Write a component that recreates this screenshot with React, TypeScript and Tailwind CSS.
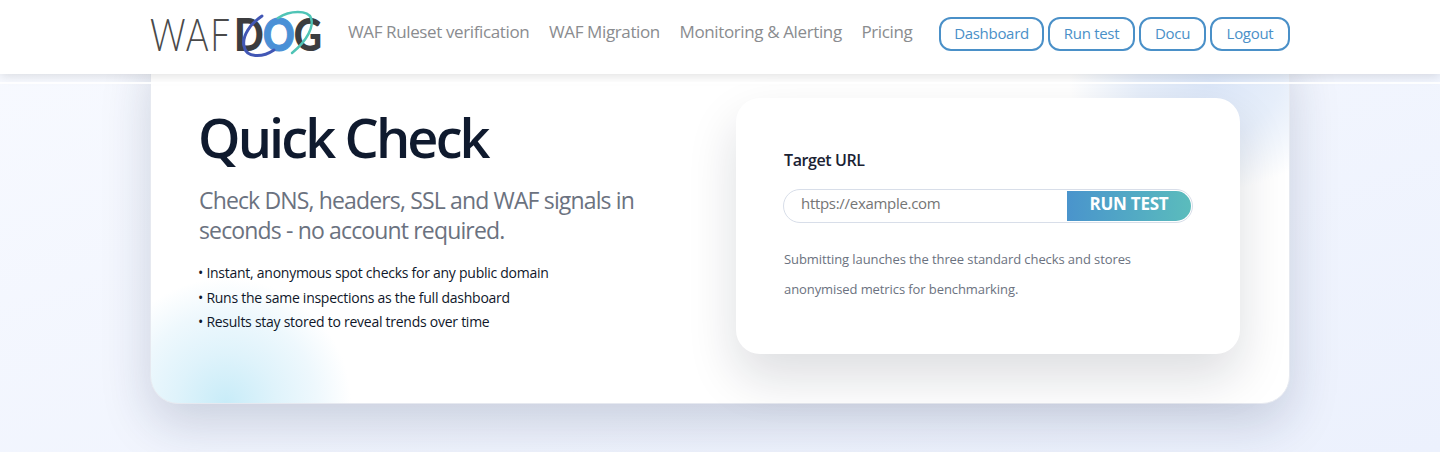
const NAV_LINKS = ['WAF Ruleset verification', 'WAF Migration', 'Monitoring & Alerting', 'Pricing'];
const NAV_BUTTONS = [
  { label: 'Dashboard', width: 'w-[105px]' },
  { label: 'Run test', width: 'w-[87px]' },
  { label: 'Docu', width: 'w-[67px]' },
  { label: 'Logout', width: 'w-[80px]' },
];
const BULLETS = [
  'Instant, anonymous spot checks for any public domain',
  'Runs the same inspections as the full dashboard',
  'Results stay stored to reveal trends over time',
];

// ─── Logo ─────────────────────────────────────────────────────────────────────
function Logo() {
  return (
    <div className="relative w-[172px] h-[44px] shrink-0 flex items-center leading-none whitespace-nowrap font-['Lato',sans-serif]">
      <span className="inline-block w-[87px] shrink-0 origin-left scale-x-[0.76] text-[46px] font-light text-[#4a4a4a] tracking-[2px] -mr-[3px]">WAF</span>
      <span className="inline-block w-[85px] shrink-0 origin-left scale-x-[0.85] text-[46px] font-black text-[#3c3d3f] tracking-[-1px]">
        D<span className="text-[#4a90d6] [-webkit-text-stroke:1px_#4a90d6]">O</span>G
      </span>
      <svg className="absolute left-0 top-[-8px]" width="172" height="60" viewBox="0 0 172 60" fill="none">
        <path d="M112 12 C 100 20, 92 32, 94 42 C 96 54, 112 54, 124 46" stroke="#4257b5" strokeWidth="3" strokeLinecap="round" />
        <path d="M128 14 C 140 6, 158 6, 161 14 C 164 22, 158 36, 142 49" stroke="#4fc4b6" strokeWidth="2.5" strokeLinecap="round" />
      </svg>
    </div>
  );
}

// ─── Header ───────────────────────────────────────────────────────────────────
function Header() {
  return (
    <header className="relative z-10 h-[74px] bg-white shadow-[0_2px_10px_rgba(0,0,0,0.12)]">
      <div className="w-[1140px] mx-auto h-full pb-[6px] flex items-center">
        <Logo />
        <nav className="ml-[26px] mb-[4px] flex gap-[19.7px] text-[17px] tracking-[-0.38px] text-[#8a8c8f]">
          {NAV_LINKS.map((link) => (
            <a key={link}>{link}</a>
          ))}
        </nav>
        <div className="ml-auto flex gap-[4px]">
          {NAV_BUTTONS.map(({ label, width }) => (
            <button
              key={label}
              className={`${width} h-[34px] pb-[2px] border-2 border-[#4a90c8] rounded-[12px] text-[15px] tracking-[-0.3px] text-[#4a90c8]`}
            >
              {label}
            </button>
          ))}
        </div>
      </div>
    </header>
  );
}

// ─── Target URL form ──────────────────────────────────────────────────────────
function TargetCard() {
  return (
    <div className="w-[504px] h-[256px] mt-[57px] shrink-0 bg-white rounded-[24px] pt-[50px] px-[47px] shadow-[0_24px_50px_rgba(15,23,42,0.14)]">
      <label className="block pl-px text-[16px] leading-[24px] font-semibold tracking-[-0.4px] text-[#1a2233]">Target URL</label>
      <div className="mt-[17px] w-[410px] h-[34px] flex items-center border border-[#d8dee9] rounded-full p-px">
        <input
          placeholder="https://example.com"
          className="flex-1 min-w-0 h-full pl-[16px] pb-[6px] bg-transparent text-[15px] tracking-[-0.3px] outline-none placeholder:text-[#757575]"
        />
        <button className="w-[124px] h-full pb-[5px] rounded-r-full bg-linear-to-r from-[#4a94cc] to-[#5bbcbc] text-white text-[17px] font-bold tracking-[-0.25px] leading-none">
          RUN TEST
        </button>
      </div>
      <p className="mt-[21px] pl-px text-[13px] leading-[30px] tracking-[-0.09px] text-[#6b7280]">
        Submitting launches the three standard checks and stores
        <br />
        anonymised metrics for benchmarking.
      </p>
    </div>
  );
}

export default function App() {
  return (
    <div className="relative h-[452px] overflow-hidden bg-linear-to-br from-[#f8faff] to-[#ecf1fd] font-['Open_Sans',sans-serif]">
      <Header />
      {/* White hairline under the header */}
      <div className="absolute z-10 left-0 right-0 top-[82px] h-[2px] bg-white/90" />

      <main className="w-[1140px] mx-auto -mt-[34px] h-[364px] rounded-[28px] border border-[#e6e9f0] bg-white bg-[radial-gradient(circle_at_75px_100%,#c8ecf8_0,#dff3fb_50px,#eef8fd_90px,#ffffff00_125px),radial-gradient(ellipse_140px_110px_at_93%_40px,#dbe6f8_0,#e6eefa_50%,#ffffff00_100%)] shadow-[0_20px_50px_rgba(20,40,80,0.18)] pl-[48px] flex">
        <div className="w-[537px] shrink-0 pt-[58px]">
          <h1 className="-ml-px text-[54px] leading-[76px] font-semibold tracking-[-2.85px] text-[#0f1a2e]">Quick Check</h1>
          <p className="mt-[10px] w-[480px] text-[23px] leading-[30px] tracking-[-0.85px] text-[#6b7280]">
            Check DNS, headers, SSL and WAF signals in seconds - no account required.
          </p>
          <ul className="mt-[16px] -ml-px text-[14px] leading-[24.5px] tracking-[-0.26px] text-[#0f172a]">
            {BULLETS.map((b) => (
              <li key={b}>• {b}</li>
            ))}
          </ul>
        </div>
        <TargetCard />
      </main>
    </div>
  );
}
